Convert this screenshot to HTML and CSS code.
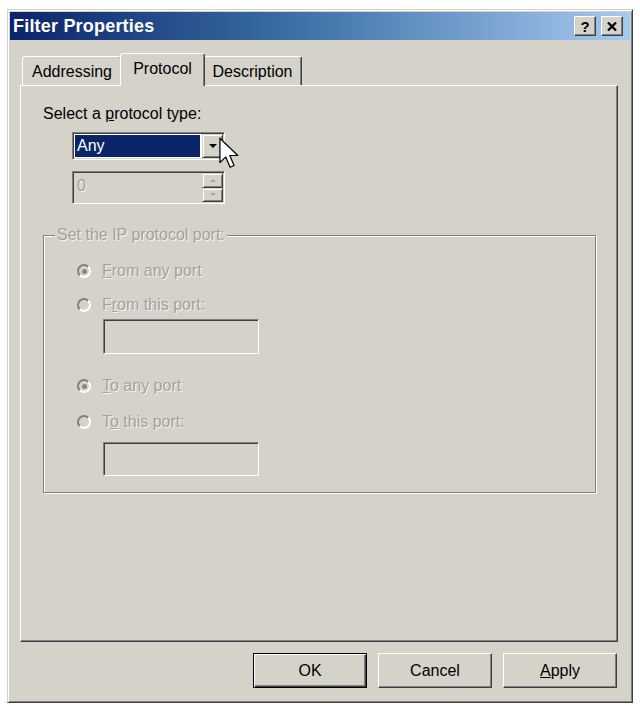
FILE: index.html
```html
<!DOCTYPE html>
<html lang="en">
<head>
  <meta charset="UTF-8" />
  <title>Filter Properties</title>
  <link rel="stylesheet" href="styles.css">
</head>
<body>
  <div class="window" role="dialog" aria-label="Filter Properties">
    <div class="titlebar">
      <span class="title">Filter Properties</span>
      <div class="caption-btns">
        <span class="cap-btn">?</span>
        <span class="cap-btn">
          <svg width="10" height="9" viewBox="0 0 10 9">
            <path d="M1 0.5 L9 8.5 M9 0.5 L1 8.5" stroke="#000" stroke-width="2.2" fill="none" />
          </svg>
        </span>
      </div>
    </div>

    <div class="dialog-body">
      <div class="tabs">
        <div class="tab tab-first">Addressing</div>
        <div class="tab active">Protocol</div>
        <div class="tab tab-last">Description</div>
      </div>

      <div class="panel">
        <div class="field-label">Select a <u>p</u>rotocol type:</div>

        <div class="combo">
          <div class="combo-value">Any</div>
          <div class="drop-btn"><span class="arrow-down"></span></div>
          <svg class="pointer" width="20" height="33" viewBox="0 0 13 21">
            <path d="M0.6 0.6 V16.4 L4.4 12.8 L7.2 19.4 L9.8 18.3 L7 11.8 H12.2 Z" fill="#fff" stroke="#000" stroke-width="0.8" stroke-linejoin="round" />
          </svg>
        </div>

        <div class="spin">
          <div class="spin-value">0</div>
          <div class="spin-btns">
            <div class="spin-btn"><span class="arrow-up small"></span></div>
            <div class="spin-btn"><span class="arrow-down small"></span></div>
          </div>
        </div>

        <fieldset class="port-group" disabled>
          <legend>Set the IP protocol port:</legend>

          <div class="radio-row row-from-any">
            <span class="radio checked"></span>
            <span class="radio-text"><u>F</u>rom any port</span>
          </div>
          <div class="radio-row row-from-this">
            <span class="radio"></span>
            <span class="radio-text">F<u>r</u>om this port:</span>
          </div>
          <div class="port-input input-from"></div>

          <div class="radio-row row-to-any">
            <span class="radio checked"></span>
            <span class="radio-text"><u>T</u>o any port</span>
          </div>
          <div class="radio-row row-to-this">
            <span class="radio"></span>
            <span class="radio-text">T<u>o</u> this port:</span>
          </div>
          <div class="port-input input-to"></div>
        </fieldset>
      </div>

      <div class="actions">
        <button class="btn btn-default">OK</button>
        <button class="btn">Cancel</button>
        <button class="btn"><u>A</u>pply</button>
      </div>
    </div>
  </div>
</body>
</html>
```

FILE: styles.css
```css
:root {
  --face: #d5d2c9;
  --shadow: #808080;
  --dark: #404040;
  --light: #ffffff;
  --disabled: #a3a199;
  --navy: #0a246a;
  --font: 'Liberation Sans', Arial, sans-serif;
}

body {
  margin: 0;
  background: #fff;
  font-family: var(--font);
  font-size: 16px;
  color: #000;
}

.window {
  margin: 9px 0 0 7px;
  width: 626px;
  height: 694px;
  box-sizing: border-box;
  padding: 2px;
  background: var(--face);
  border: 1px solid;
  border-color: var(--face) var(--dark) var(--dark) var(--face);
  box-shadow: inset 1px 1px var(--light), inset -1px -1px var(--shadow);
  display: flex;
  flex-direction: column;
}

/* caption */
.titlebar {
  height: 28px;
  flex: none;
  display: flex;
  align-items: center;
  justify-content: space-between;
  padding: 0 7px 0 3px;
  background: linear-gradient(to right, #0a246a 0%, #3a6ea5 45%, #a6caf0 100%);
}

.title {
  color: #fff;
  font-weight: 700;
  font-size: 18px;
  letter-spacing: 0.2px;
}

.caption-btns {
  display: flex;
  gap: 5px;
}

.cap-btn {
  width: 22px;
  height: 20px;
  box-sizing: border-box;
  display: flex;
  align-items: center;
  justify-content: center;
  background: var(--face);
  border: 1px solid;
  border-color: var(--light) var(--dark) var(--dark) var(--light);
  box-shadow: inset -1px -1px var(--shadow);
  font-weight: 700;
  font-size: 15px;
  line-height: 1;
}

.dialog-body {
  flex: 1;
  display: flex;
  flex-direction: column;
  padding: 13px 12px 12px 10px;
}

/* tab strip */
.tabs {
  height: 32px;
  flex: none;
  display: flex;
  align-items: flex-end;
  padding-left: 2px;
}

.tab {
  height: 29px;
  box-sizing: border-box;
  display: flex;
  align-items: center;
  justify-content: center;
  padding-top: 2px;
  border: 1px solid;
  border-bottom: 0;
  border-color: var(--light) var(--dark) transparent var(--light);
  box-shadow: inset -1px 0 var(--shadow);
  border-radius: 3px 3px 0 0;
  background: var(--face);
}

.tab-first {
  width: 100px;
}

.tab-last {
  width: 99px;
}

.tab.active {
  width: 85px;
  height: 33px;
  margin: 0 -2px -1px;
  padding: 0 0 3px;
  position: relative;
  z-index: 1;
}

.panel {
  flex: 1;
  border: 1px solid;
  border-color: var(--light) var(--dark) var(--dark) var(--light);
  box-shadow: inset -1px -1px var(--shadow);
  padding-top: 19px;
}

.field-label {
  margin-left: 22px;
  line-height: 18px;
}

/* sunken edit frame */
.combo,
.spin,
.port-input {
  box-sizing: border-box;
  border: 1px solid;
  border-color: var(--shadow) var(--light) var(--light) var(--shadow);
  box-shadow: inset 1px 1px var(--dark), inset -1px -1px var(--face);
  padding: 1px;
}

.combo {
  width: 153px;
  height: 28px;
  margin: 9px 0 0 51px;
  display: flex;
  background: #fff;
  position: relative;
}

.combo-value {
  flex: 1;
  margin: 1px 2px 1px 1px;
  padding-left: 2px;
  background: var(--navy);
  color: #fff;
  line-height: 22px;
}

.drop-btn,
.spin-btn {
  box-sizing: border-box;
  display: flex;
  align-items: center;
  justify-content: center;
  background: var(--face);
  border: 1px solid;
  border-color: var(--face) var(--dark) var(--dark) var(--face);
  box-shadow: inset 1px 1px var(--light), inset -1px -1px var(--shadow);
}

.drop-btn {
  width: 21px;
}

.arrow-down {
  width: 0;
  height: 0;
  border-left: 4px solid transparent;
  border-right: 4px solid transparent;
  border-top: 4px solid #000;
}

.arrow-up {
  width: 0;
  height: 0;
  border-left: 4px solid transparent;
  border-right: 4px solid transparent;
  border-bottom: 4px solid #000;
}

.arrow-down.small {
  border-width: 3px 3px 0;
  border-top-color: var(--disabled);
}

.arrow-up.small {
  border-width: 0 3px 3px;
  border-bottom-color: var(--disabled);
}

.pointer {
  position: absolute;
  left: 146px;
  top: 4px;
}

.spin {
  width: 153px;
  height: 33px;
  margin: 11px 0 0 51px;
  display: flex;
  background: var(--face);
}

.spin-value {
  flex: 1;
  padding: 4px 0 0 3px;
  color: var(--disabled);
  text-shadow: 1px 1px rgba(255, 255, 255, 0.8);
}

.spin-btns {
  width: 21px;
  display: flex;
  flex-direction: column;
}

.spin-btn {
  flex: 1;
}

/* port group */
.port-group {
  margin: 22px 21px 0 22px;
  padding: 0 0 16px;
  min-width: 0;
  border: 1px solid var(--shadow);
  box-shadow: inset 1px 1px var(--light), 1px 1px var(--light);
}

.port-group legend {
  margin-left: 11px;
  padding: 0 2px;
  line-height: 18px;
  background: var(--face);
  color: var(--disabled);
  text-shadow: 1px 1px rgba(255, 255, 255, 0.8);
}

.radio-row {
  height: 20px;
  display: flex;
  align-items: center;
  gap: 11px;
  margin-left: 33px;
}

.row-from-any {
  margin-top: 17px;
}

.row-from-this {
  margin-top: 14px;
}

.row-to-any {
  margin-top: 22px;
}

.row-to-this {
  margin-top: 16px;
}

.radio {
  flex: none;
  width: 14px;
  height: 14px;
  box-sizing: border-box;
  border-radius: 50%;
  border: 2px solid;
  border-color: var(--shadow) var(--light) var(--light) var(--shadow);
  background: var(--face);
  display: flex;
  align-items: center;
  justify-content: center;
}

.radio.checked::after {
  content: '';
  width: 5px;
  height: 5px;
  border-radius: 50%;
  background: #8a8882;
}

.radio-text {
  color: var(--disabled);
  text-shadow: 1px 1px rgba(255, 255, 255, 0.8);
}

.port-input {
  width: 156px;
  height: 35px;
  margin-left: 59px;
  background: var(--face);
}

.input-from {
  margin-top: 4px;
}

.input-to {
  margin-top: 10px;
  height: 34px;
}

/* dialog buttons */
.actions {
  flex: none;
  display: flex;
  justify-content: flex-end;
  gap: 11px;
  margin-top: 11px;
  padding-right: 1px;
}

.btn {
  width: 114px;
  height: 35px;
  box-sizing: border-box;
  font-family: var(--font);
  font-size: 16px;
  color: #000;
  background: var(--face);
  border: 1px solid;
  border-color: var(--light) var(--dark) var(--dark) var(--light);
  box-shadow: inset -1px -1px var(--shadow);
  padding: 0;
}

.btn-default {
  border-color: #000;
  box-shadow: inset 1px 1px var(--light), inset -1px -1px var(--dark), inset -2px -2px var(--shadow);
}
```
